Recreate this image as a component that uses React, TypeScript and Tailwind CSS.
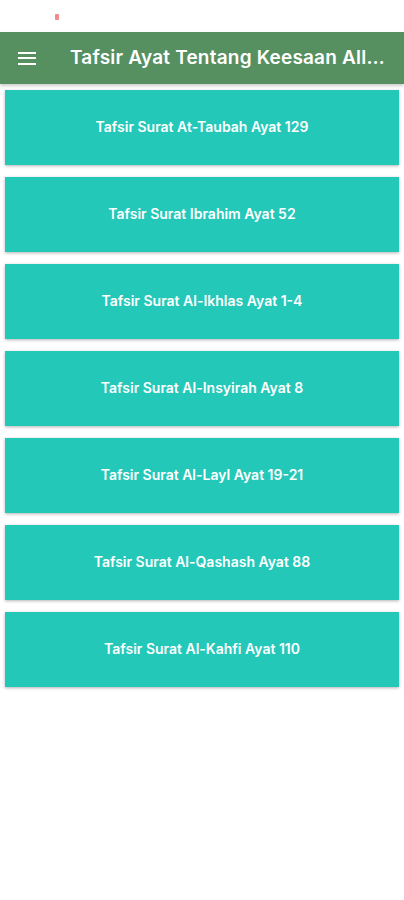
import React from "react";

const items = [
  "Tafsir Surat At-Taubah Ayat 129",
  "Tafsir Surat Ibrahim Ayat 52",
  "Tafsir Surat Al-Ikhlas Ayat 1-4",
  "Tafsir Surat Al-Insyirah Ayat 8",
  "Tafsir Surat Al-Layl Ayat 19-21",
  "Tafsir Surat Al-Qashash Ayat 88",
  "Tafsir Surat Al-Kahfi Ayat 110",
];

export default function App() {
  return (
    <div className="w-[404px] h-[900px] bg-white" style={{ fontFamily: "Inter, 'Open Sans', sans-serif" }}>
      <div className="h-[32px] relative">
        <div className="absolute left-[55px] top-[14px] w-[4px] h-[6px] bg-[#f28b8b] rounded-[1px]" />
      </div>
      <div className="h-[52px] bg-[#568f60] flex items-center shadow-[0_2px_3px_rgba(0,0,0,0.2)]">
        <div className="ml-[18px] w-[18px] flex flex-col gap-[3.5px]">
          <div className="h-[2px] bg-white" />
          <div className="h-[2px] bg-white" />
          <div className="h-[2px] bg-white" />
        </div>
        <div className="ml-[34px] text-white text-[19px] font-semibold tracking-[0.2px] whitespace-nowrap overflow-hidden text-ellipsis w-[318px]">
          Tafsir Ayat Tentang Keesaan Allah
        </div>
      </div>
      <div className="flex flex-col gap-[12px] px-[5px] pt-[6px]">
        {items.map((t) => (
          <div
            key={t}
            className="h-[75px] bg-[#23c8b9] flex items-center justify-center pb-[2px] text-white text-[14px] font-semibold shadow-[0_1px_3px_rgba(0,0,0,0.3)]"
          >
            {t}
          </div>
        ))}
      </div>
    </div>
  );
}
